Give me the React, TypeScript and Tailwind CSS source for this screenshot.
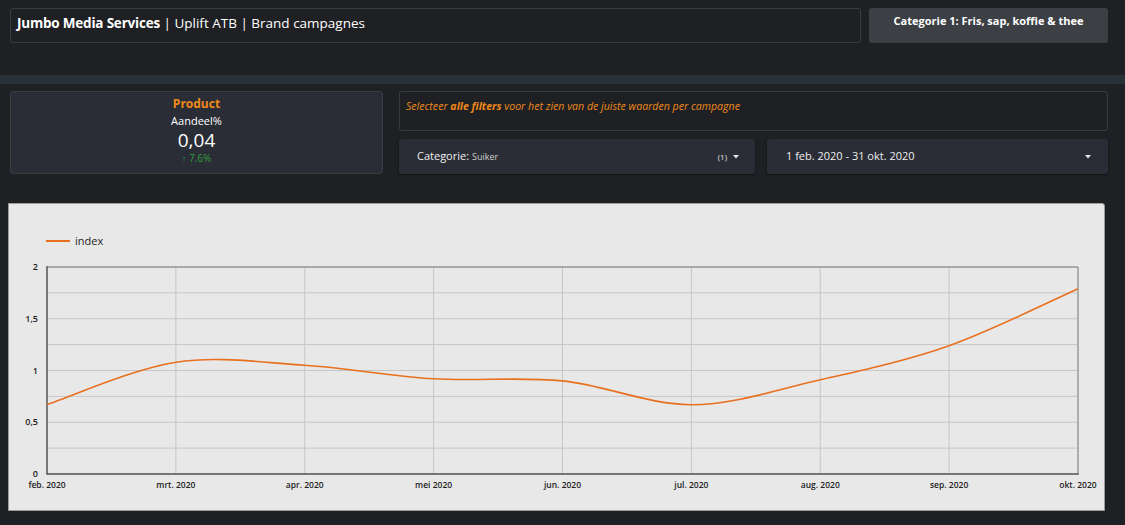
import React from "react";

const months = ["feb. 2020", "mrt. 2020", "apr. 2020", "mei 2020", "jun. 2020", "jul. 2020", "aug. 2020", "sep. 2020", "okt. 2020"];
const values = [0.67, 1.08, 1.05, 0.92, 0.9, 0.67, 0.91, 1.24, 1.79];

const X0 = 38;
const X1 = 1069;
const Y0 = 19;
const Y1 = 226;
const xs = (i: number) => X0 + (i * (X1 - X0)) / 8;
const ys = (v: number) => Y0 + ((2 - v) * (Y1 - Y0)) / 2;

function curvePath() {
  const pts = values.map((v, i) => [xs(i), ys(v)]);
  let d = `M${pts[0][0]},${pts[0][1]}`;
  for (let i = 0; i < pts.length - 1; i++) {
    const p0 = pts[Math.max(0, i - 1)];
    const p1 = pts[i];
    const p2 = pts[i + 1];
    const p3 = pts[Math.min(pts.length - 1, i + 2)];
    const c1x = p1[0] + (p2[0] - p0[0]) / 6;
    const c1y = p1[1] + (p2[1] - p0[1]) / 6;
    const c2x = p2[0] - (p3[0] - p1[0]) / 6;
    const c2y = p2[1] - (p3[1] - p1[1]) / 6;
    d += ` C${c1x.toFixed(1)},${c1y.toFixed(1)} ${c2x.toFixed(1)},${c2y.toFixed(1)} ${p2[0].toFixed(1)},${p2[1].toFixed(1)}`;
  }
  return d;
}

function Caret() {
  return (
    <svg width="6" height="4" viewBox="0 0 6 4">
      <path d="M0 0 L6 0 L3 3.5 Z" fill="#e6e6e6" />
    </svg>
  );
}

function Chart() {
  const hLines = [0, 0.25, 0.5, 0.75, 1, 1.25, 1.5, 1.75, 2];
  const yLabels: [number, string][] = [
    [2, "2"],
    [1.5, "1,5"],
    [1, "1"],
    [0.5, "0,5"],
    [0, "0"],
  ];
  return (
    <svg width="1097" height="262" viewBox="0 0 1097 262" className="block">
      {hLines.map((v) => (
        <line key={v} x1={X0} x2={X1} y1={ys(v)} y2={ys(v)} stroke="#c6c6c6" strokeWidth="1" />
      ))}
      {months.map((_, i) =>
        i > 0 && i < 8 ? (
          <line key={i} x1={xs(i)} x2={xs(i)} y1={Y0} y2={Y1} stroke="#c6c6c6" strokeWidth="1" />
        ) : null
      )}
      <line x1={X0} x2={X1} y1={Y0} y2={Y0} stroke="#9a9a9a" strokeWidth="1.5" />
      <line x1={X1} x2={X1} y1={Y0} y2={Y1} stroke="#9a9a9a" strokeWidth="1.5" />
      <line x1={X0} x2={X0} y1={Y0 - 0.7} y2={Y1 + 0.7} stroke="#555" strokeWidth="1.5" />
      <line x1={X0} x2={X1 + 0.7} y1={Y1} y2={Y1} stroke="#555" strokeWidth="1.5" />
      <path d={curvePath()} fill="none" stroke="#e8701f" strokeWidth="1.6" />
      {yLabels.map(([v, t]) => (
        <text
          key={t}
          x={29}
          y={ys(v) + 3}
          textAnchor="end"
          fontSize="9"
          fontWeight="600"
          fill="#222"
          fontFamily="Open Sans, sans-serif"
        >
          {t}
        </text>
      ))}
      {months.map((m, i) => (
        <text
          key={m}
          x={xs(i)}
          y={240}
          textAnchor="middle"
          fontSize="8.5"
          fontWeight="600"
          fill="#222"
          fontFamily="Open Sans, sans-serif"
        >
          {m}
        </text>
      ))}
    </svg>
  );
}

export default function App() {
  return (
    <div className="w-[1125px] h-[525px] overflow-hidden bg-[#1f2023] font-['Open_Sans',sans-serif]">
      <div className="flex gap-[8px] pl-[10px] pt-[8px]">
        <div className="flex h-[35px] w-[851px] items-start rounded-[3px] border border-[#3a3b3f] bg-[#1f2024] pl-[6px] pt-[5px] text-[13.5px] leading-[18px] text-white">
          <span className="font-bold tracking-[-0.2px]">Jumbo Media Services</span>
          <span className="whitespace-pre"> | Uplift ATB | Brand campagnes</span>
        </div>
        <div className="flex h-[35px] w-[239px] items-start justify-center rounded-[3px] bg-[#3c4044] pt-[5px] text-[11px] font-bold text-white">
          Categorie 1: Fris, sap, koffie &amp; thee
        </div>
      </div>

      <div className="mt-[32px] h-[9px] bg-[#263238]" />

      <div className="mt-[7px] flex gap-[16px] pl-[10px]">
        <div className="flex h-[83px] w-[373px] flex-col items-center rounded-[3px] border border-[#3a3d44] bg-[#2a2d35] pt-[4px]">
          <div className="text-[12px] font-bold leading-[16px] text-[#ee8a1a]">Product</div>
          <div className="mt-[2px] text-[11px] leading-[14px] text-white">Aandeel%</div>
          <div className="text-[19px] leading-[24px] text-white">0,04</div>
          <div className="text-[10px] leading-[12px] text-[#2f9a3a]">
            <span className="text-[9px]">↑</span> 7.6%
          </div>
        </div>

        <div className="flex w-[709px] flex-col gap-[8px]">
          <div className="h-[40px] rounded-[3px] border border-[#3a3b3f] bg-[#1f2024] pl-[6px] pt-[7px] text-[10.6px] italic text-[#ee8a1a]">
            Selecteer <span className="font-bold">alle filters</span> voor het zien van de juiste waarden per campagne
          </div>
          <div className="flex gap-[12px]">
            <div className="flex h-[35px] w-[356px] items-center rounded-[3px] bg-[#2a2d35] pl-[18px] pr-[16px] shadow-[0_1px_2px_rgba(0,0,0,0.5)]">
              <span className="text-[11px] text-[#eeeeee]">Categorie:</span>
              <span className="ml-[3px] text-[9px] text-[#cfcfcf]">Suiker</span>
              <span className="ml-auto text-[8px] text-[#e6e6e6]">(1)</span>
              <span className="ml-[6px]">
                <Caret />
              </span>
            </div>
            <div className="flex h-[35px] w-[341px] items-center rounded-[3px] bg-[#2a2d35] pl-[19px] pr-[17px] shadow-[0_1px_2px_rgba(0,0,0,0.5)]">
              <span className="text-[11px] text-[#eeeeee]">1 feb. 2020 - 31 okt. 2020</span>
              <span className="ml-auto">
                <Caret />
              </span>
            </div>
          </div>
        </div>
      </div>

      <div className="ml-[8px] mt-[29px] h-[308px] w-[1097px] overflow-hidden rounded-tr-[3px] border border-[#9c9c9c] bg-[#e8e8e9]">
        <div className="flex items-center gap-[5px] pl-[37px] pt-[30px]">
          <div className="h-[2px] w-[24px] bg-[#e8701f]" />
          <span className="text-[11px] leading-[14px] text-[#222]">index</span>
        </div>
        <Chart />
      </div>
    </div>
  );
}
